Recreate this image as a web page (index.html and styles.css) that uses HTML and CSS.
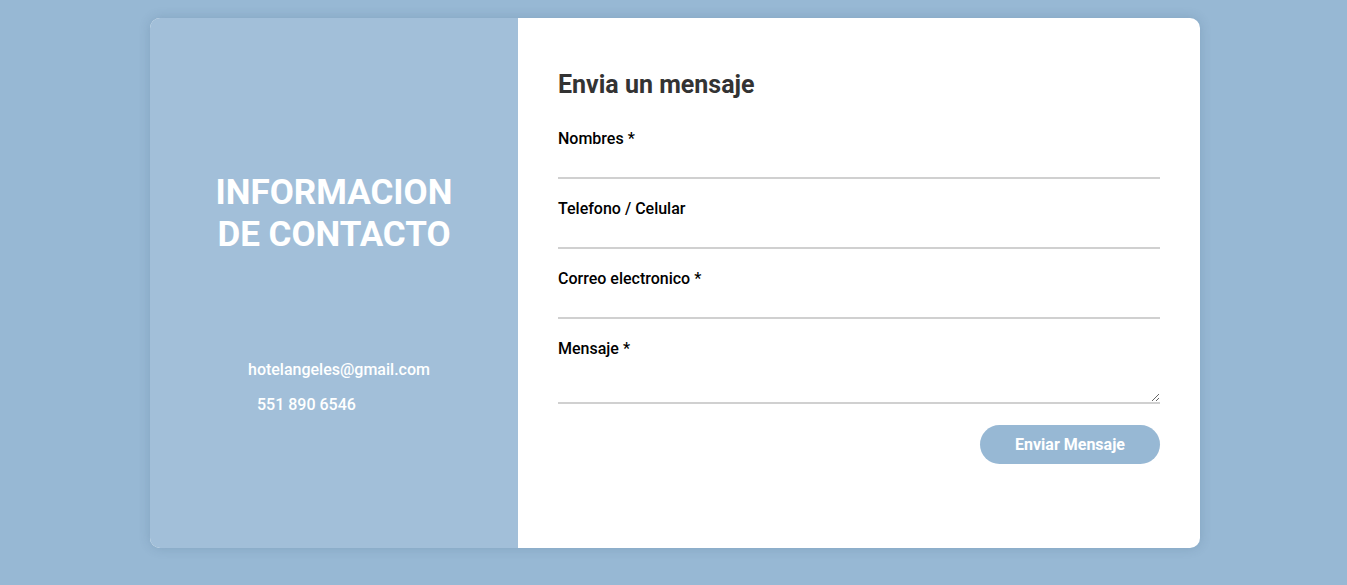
FILE: index.html
```html
<!DOCTYPE html>
<html lang="es">
<head>
<meta charset="utf-8">
<title>Contacto</title>
<link rel="stylesheet" href="styles.css">
</head>
<body>
<div class="page">
  <div class="card">
    <aside class="info">
      <h2 class="info-title">INFORMACION<br>DE CONTACTO</h2>
      <ul class="info-list">
        <li class="info-email">hotelangeles@gmail.com</li>
        <li class="info-phone">551 890 6546</li>
      </ul>
    </aside>
    <section class="form-side">
      <h3 class="form-title">Envia un mensaje</h3>
      <form class="form">
        <label class="field">
          <span class="field-label">Nombres *</span>
          <input class="field-input" type="text">
        </label>
        <label class="field">
          <span class="field-label">Telefono / Celular</span>
          <input class="field-input" type="text">
        </label>
        <label class="field">
          <span class="field-label">Correo electronico *</span>
          <input class="field-input" type="email">
        </label>
        <label class="field">
          <span class="field-label">Mensaje *</span>
          <textarea class="field-textarea"></textarea>
        </label>
        <div class="actions">
          <button class="submit" type="button">Enviar Mensaje</button>
        </div>
      </form>
    </section>
  </div>
</div>
</body>
</html>
```
FILE: styles.css
```css
* { box-sizing: border-box; }
html, body { margin: 0; padding: 0; }
body {
  background: #97b8d4;
  font-family: Roboto, "Liberation Sans", sans-serif;
  height: 585px;
  overflow: hidden;
}
.page {
  display: flex;
  padding: 18px 0 0 150px;
}
.card {
  width: 1050px;
  height: 530px;
  display: flex;
  border-radius: 10px;
  overflow: hidden;
  background: #fff;
  box-shadow: 0 0 12px rgba(40, 70, 100, 0.18);
}
.info {
  width: 368px;
  flex: none;
  background: #a2bfd9;
  color: #fff;
  padding-top: 154px;
}
.info-title {
  margin: 0;
  text-align: center;
  font-size: 35px;
  line-height: 42px;
  font-weight: 700;
}
.info-list {
  list-style: none;
  margin: 104px 0 0;
  padding: 0;
  font-size: 16px;
  font-weight: 500;
}
.info-email { margin-left: 98px; line-height: 19px; }
.info-phone { margin-left: 107px; line-height: 19px; margin-top: 16px; }

.form-side {
  flex: 1;
  padding: 52px 40px 0;
}
.form-title {
  margin: 0;
  font-size: 25px;
  line-height: 30px;
  font-weight: 700;
  color: #333;
}
.form { margin-top: 30px; }
.field {
  display: flex;
  flex-direction: column;
  margin-bottom: 21px;
}
.field-label {
  font-size: 16px;
  font-weight: 500;
  color: #000;
  line-height: 18px;
}
.field-input {
  border: 0;
  border-bottom: 2px solid #d0d0d0;
  height: 31px;
  outline: none;
  font: inherit;
  background: transparent;
}
.field-textarea {
  border: 0;
  border-bottom: 2px solid #d0d0d0;
  height: 46px;
  resize: vertical;
  outline: none;
  font: inherit;
  background: transparent;
}
.actions {
  display: flex;
  justify-content: flex-end;
  margin-top: 2px;
}
.submit {
  width: 180px;
  height: 39px;
  border: 0;
  border-radius: 20px;
  background: #97b8d4;
  color: #fff;
  font-family: Roboto, "Liberation Sans", sans-serif;
  font-size: 16px;
  font-weight: 700;
}
```
